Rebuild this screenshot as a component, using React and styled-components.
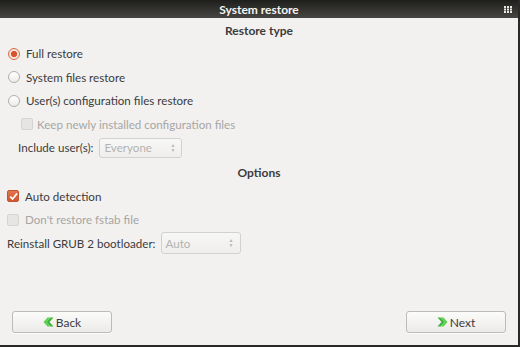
import React from "react";
import styled, { createGlobalStyle } from "styled-components";

const Global = createGlobalStyle`
  html, body { margin: 0; padding: 0; }
  body { background: #2b2a28; font-family: "Lato", "Open Sans", sans-serif; }
`;

const Window = styled.div`
  width: 518px;
  height: 345px;
  border-right: 2px solid #2a2927;
  border-bottom: 2px solid #2a2927;
  background: #f2f1f0;
  display: flex;
  flex-direction: column;
  color: #3c3c3c;
  font-size: 11.6px;
`;

const TitleBar = styled.div`
  height: 18px;
  flex: none;
  background: linear-gradient(#1e1e1c, #474642);
  display: flex;
  align-items: center;
  justify-content: center;
  position: relative;
  color: #f4f4f2;
  font-weight: bold;
  font-size: 12px;
`;

const GridIcon = styled.svg`
  position: absolute;
  right: 6px;
  top: 6px;
`;

const Content = styled.div`
  flex: 1;
  display: flex;
  flex-direction: column;
`;

const Header = styled.div`
  height: ${(p) => p.$h}px;
  display: flex;
  align-items: center;
  justify-content: center;
  font-weight: bold;
  font-size: 12px;
`;

const Row = styled.div`
  height: 23.5px;
  display: flex;
  align-items: center;
  padding-left: ${(p) => p.$indent}px;
  gap: ${(p) => p.$gap ?? 6}px;
  color: ${(p) => (p.$disabled ? "#a7a6a4" : "#3c3c3c")};
`;

const Radio = styled.span`
  width: 10px;
  height: 10px;
  border-radius: 50%;
  flex: none;
  border: 1px solid ${(p) => (p.$on ? "#d96a44" : "#b1afab")};
  background: ${(p) =>
    p.$on
      ? "radial-gradient(circle, #d6532d 0 2.8px, #f7e6df 3.3px 100%)"
      : "linear-gradient(#ffffff, #ecebea)"};
`;

const Check = styled.span`
  width: 10px;
  height: 10px;
  border-radius: 2px;
  flex: none;
  display: flex;
  align-items: center;
  justify-content: center;
  border: 1px solid ${(p) => (p.$on ? "#c25530" : p.$disabled ? "#d5d4d1" : "#b1afab")};
  background: ${(p) =>
    p.$on ? "linear-gradient(#e57650, #d0552e)" : p.$disabled ? "#e6e5e3" : "#fff"};
`;

const Combo = styled.div`
  width: ${(p) => p.$w}px;
  height: ${(p) => p.$h}px;
  box-sizing: border-box;
  border: 1px solid #d3d1cd;
  border-radius: 3px;
  background: linear-gradient(#f7f7f6, #efeeec);
  color: #b4b3b0;
  display: flex;
  align-items: center;
  justify-content: space-between;
  padding: 0 6px 0 4px;
`;

const Arrows = styled.span`
  display: flex;
  flex-direction: column;
  font-size: 5px;
  line-height: 5px;
  color: #b8b7b4;
`;

const Footer = styled.div`
  margin-top: auto;
  display: flex;
  justify-content: space-between;
  padding: 0 12px 12px 12px;
`;

const Button = styled.div`
  width: 100px;
  height: 22px;
  box-sizing: border-box;
  border: 1px solid #bdbbb7;
  border-radius: 3px;
  background: linear-gradient(#fbfbfa, #ecebe9);
  display: flex;
  align-items: center;
  justify-content: center;
  gap: 2px;
  color: #3c3c3c;
  font-size: 12px;
  box-shadow: 0 1px 0 rgba(255,255,255,0.7);
`;

const Chevrons = ({ dir }) => (
  <svg width="11" height="10" viewBox="0 0 11 10">
    <g fill="#3fb43c" transform={dir === "left" ? "translate(11,0) scale(-1,1)" : undefined}>
      <path d="M0.5 0.5 L3.5 0.5 L7.5 5 L3.5 9.5 L0.5 9.5 L4.5 5 Z" />
      <path d="M3.5 0.5 L6.5 0.5 L10.5 5 L6.5 9.5 L3.5 9.5 L7.5 5 Z" fill="#5fd04e" />
    </g>
  </svg>
);

const Tick = () => (
  <svg width="9" height="9" viewBox="0 0 9 9">
    <path d="M1.2 4.6 L3.6 7 L8 1.5" stroke="#fff" strokeWidth="1.8" fill="none" />
  </svg>
);

export default function App() {
  return (
    <>
      <Global />
      <Window>
        <TitleBar>
          System restore
          <GridIcon width="8" height="7" viewBox="0 0 8 7">
            {[0, 3, 6].map((x) =>
              [0, 2.5, 5].map((y) => (
                <rect key={`${x}-${y}`} x={x} y={y} width="2" height="2" fill="#e8e8e6" />
              ))
            )}
          </GridIcon>
        </TitleBar>
        <Content>
          <Header $h={24}>Restore type</Header>
          <Row $indent={8}>
            <Radio $on />
            Full restore
          </Row>
          <Row $indent={8}>
            <Radio />
            System files restore
          </Row>
          <Row $indent={8}>
            <Radio />
            User(s) configuration files restore
          </Row>
          <Row $indent={21} $gap={4} $disabled>
            <Check $disabled />
            Keep newly installed configuration files
          </Row>
          <Row $indent={18} $gap={6}>
            Include user(s):
            <Combo $w={83} $h={20}>
              Everyone
              <Arrows>
                <span>▲</span>
                <span>▼</span>
              </Arrows>
            </Combo>
          </Row>
          <Header $h={25}>Options</Header>
          <Row $indent={7}>
            <Check $on>
              <Tick />
            </Check>
            Auto detection
          </Row>
          <Row $indent={7} $disabled>
            <Check $disabled />
            Don't restore fstab file
          </Row>
          <Row $indent={7} $gap={5}>
            Reinstall GRUB 2 bootloader:
            <Combo $w={80} $h={22}>
              Auto
              <Arrows>
                <span>▲</span>
                <span>▼</span>
              </Arrows>
            </Combo>
          </Row>
          <Footer>
            <Button>
              <Chevrons dir="left" />
              Back
            </Button>
            <Button>
              <Chevrons dir="right" />
              Next
            </Button>
          </Footer>
        </Content>
      </Window>
    </>
  );
}
